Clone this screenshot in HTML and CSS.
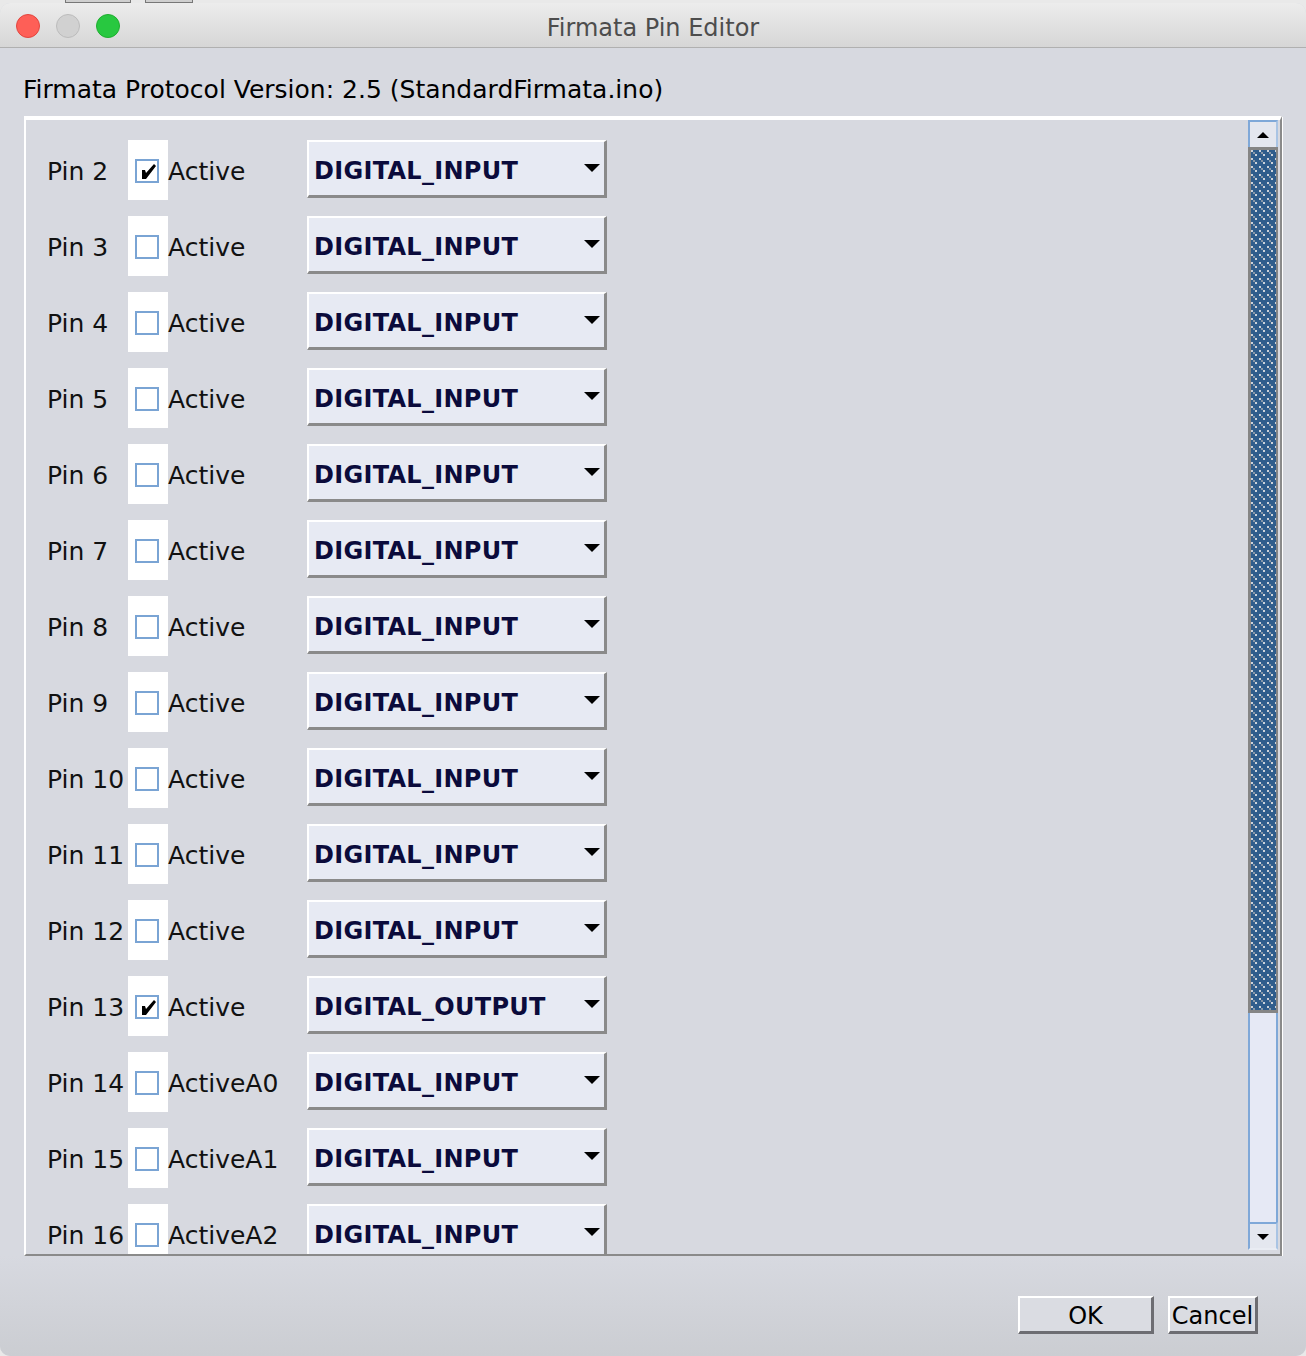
FILE: index.html
```html
<!DOCTYPE html>
<html>
<head>
<meta charset="utf-8">
<title>Firmata Pin Editor</title>
<link rel="stylesheet" href="styles.css">
</head>
<body>
<div class="desk"><span class="dk dk1"></span><span class="dk dk2"></span></div>
<div class="window">
  <div class="titlebar">
    <div class="lights"><span class="light red"></span><span class="light grey"></span><span class="light green"></span></div>
    <div class="title">Firmata Pin Editor</div>
    <div></div>
  </div>
  <div class="header">Firmata Protocol Version: 2.5 (StandardFirmata.ino)</div>
  <div class="scrollpane">
    <div class="viewport">
      <div class="row"><span class="pin">Pin 2</span><span class="cbcell"><span class="cb"><svg class="chk" viewBox="2 2 20 20"><polygon points="7,11 10,11 11,14 19,5 21,7 11,20 7,20"/></svg></span></span><span class="lbl">Active</span><div class="combo"><span>DIGITAL_INPUT</span><span class="arrow"></span></div></div>
      <div class="row"><span class="pin">Pin 3</span><span class="cbcell"><span class="cb"></span></span><span class="lbl">Active</span><div class="combo"><span>DIGITAL_INPUT</span><span class="arrow"></span></div></div>
      <div class="row"><span class="pin">Pin 4</span><span class="cbcell"><span class="cb"></span></span><span class="lbl">Active</span><div class="combo"><span>DIGITAL_INPUT</span><span class="arrow"></span></div></div>
      <div class="row"><span class="pin">Pin 5</span><span class="cbcell"><span class="cb"></span></span><span class="lbl">Active</span><div class="combo"><span>DIGITAL_INPUT</span><span class="arrow"></span></div></div>
      <div class="row"><span class="pin">Pin 6</span><span class="cbcell"><span class="cb"></span></span><span class="lbl">Active</span><div class="combo"><span>DIGITAL_INPUT</span><span class="arrow"></span></div></div>
      <div class="row"><span class="pin">Pin 7</span><span class="cbcell"><span class="cb"></span></span><span class="lbl">Active</span><div class="combo"><span>DIGITAL_INPUT</span><span class="arrow"></span></div></div>
      <div class="row"><span class="pin">Pin 8</span><span class="cbcell"><span class="cb"></span></span><span class="lbl">Active</span><div class="combo"><span>DIGITAL_INPUT</span><span class="arrow"></span></div></div>
      <div class="row"><span class="pin">Pin 9</span><span class="cbcell"><span class="cb"></span></span><span class="lbl">Active</span><div class="combo"><span>DIGITAL_INPUT</span><span class="arrow"></span></div></div>
      <div class="row"><span class="pin">Pin 10</span><span class="cbcell"><span class="cb"></span></span><span class="lbl">Active</span><div class="combo"><span>DIGITAL_INPUT</span><span class="arrow"></span></div></div>
      <div class="row"><span class="pin">Pin 11</span><span class="cbcell"><span class="cb"></span></span><span class="lbl">Active</span><div class="combo"><span>DIGITAL_INPUT</span><span class="arrow"></span></div></div>
      <div class="row"><span class="pin">Pin 12</span><span class="cbcell"><span class="cb"></span></span><span class="lbl">Active</span><div class="combo"><span>DIGITAL_INPUT</span><span class="arrow"></span></div></div>
      <div class="row"><span class="pin">Pin 13</span><span class="cbcell"><span class="cb"><svg class="chk" viewBox="2 2 20 20"><polygon points="7,11 10,11 11,14 19,5 21,7 11,20 7,20"/></svg></span></span><span class="lbl">Active</span><div class="combo"><span>DIGITAL_OUTPUT</span><span class="arrow"></span></div></div>
      <div class="row"><span class="pin">Pin 14</span><span class="cbcell"><span class="cb"></span></span><span class="lbl">ActiveA0</span><div class="combo"><span>DIGITAL_INPUT</span><span class="arrow"></span></div></div>
      <div class="row"><span class="pin">Pin 15</span><span class="cbcell"><span class="cb"></span></span><span class="lbl">ActiveA1</span><div class="combo"><span>DIGITAL_INPUT</span><span class="arrow"></span></div></div>
      <div class="row"><span class="pin">Pin 16</span><span class="cbcell"><span class="cb"></span></span><span class="lbl">ActiveA2</span><div class="combo"><span>DIGITAL_INPUT</span><span class="arrow"></span></div></div>
    </div>
    <div class="scrollbar">
      <div class="sb-btn sb-up"><span class="tri-up"></span></div>
      <div class="sb-thumb">
        <svg class="thumb-fill" preserveAspectRatio="none">
          <defs>
            <pattern id="dots" width="8" height="8" patternUnits="userSpaceOnUse">
              <rect width="8" height="8" fill="#2f5d8c"/>
              <rect x="0" y="0" width="2" height="2" fill="#cdd3da"/>
              <rect x="2" y="2" width="2" height="2" fill="#8797a8"/>
              <rect x="4" y="4" width="2" height="2" fill="#cdd3da"/>
            </pattern>
          </defs>
          <rect width="100%" height="100%" fill="url(#dots)"/>
        </svg>
      </div>
      <div class="sb-track"></div>
      <div class="sb-btn sb-down"><span class="tri-down"></span></div>
    </div>
  </div>
  <div class="footer">
    <button class="btn ok">OK</button>
    <button class="btn cancel">Cancel</button>
  </div>
</div>
</body>
</html>
```

FILE: styles.css
```css
html, body {
  margin: 0;
  padding: 0;
}
body {
  width: 1306px;
  height: 1356px;
  overflow: hidden;
  background: #e9e9e9;
  font-family: "DejaVu Sans", "Liberation Sans", sans-serif;
}

.desk {
  height: 3px;
  display: flex;
}
.dk {
  display: block;
  box-sizing: border-box;
  background: #cfcfcf;
  border: 1px solid #777;
  border-top: none;
}
.dk1 { margin-left: 65px; width: 66px; }
.dk2 { margin-left: 14px; width: 48px; }

.window {
  height: 1353px;
  border-radius: 10px;
  overflow: hidden;
  background: #d7d9e0;
  display: flex;
  flex-direction: column;
}

.titlebar {
  height: 45px;
  flex: none;
  box-sizing: border-box;
  background: linear-gradient(#ececec, #d6d6d6);
  border-bottom: 1px solid #b0b0b0;
  display: grid;
  grid-template-columns: 1fr auto 1fr;
  align-items: center;
}
.lights {
  display: flex;
  gap: 16px;
  padding-left: 16px;
  margin-top: 2px;
}
.light {
  width: 24px;
  height: 24px;
  border-radius: 50%;
  box-sizing: border-box;
  border: 1px solid;
}
.red { background: #fe5f57; border-color: #e2463f; }
.grey { background: #d1d1d1; border-color: #bcbcbc; }
.green { background: #28c840; border-color: #1fae2f; }
.title {
  font-size: 24px;
  color: #4d4d4d;
  margin-top: 5px;
}

.header {
  height: 68px;
  flex: none;
  box-sizing: border-box;
  padding: 27px 0 0 23px;
  font-size: 25px;
  line-height: 29px;
  color: #000;
}

.scrollpane {
  margin-left: 24px;
  width: 1258px;
  height: 1140px;
  flex: none;
  box-sizing: border-box;
  border-top: 4px solid #fff;
  border-left: 2px solid #fff;
  border-right: 2px solid #8a8a8a;
  border-bottom: 2px solid #8a8a8a;
  box-shadow: 1px 1px 0 #fff;
  display: flex;
}

.viewport {
  flex: 1;
  overflow: hidden;
  padding: 20px 0 0 21px;
}

.row {
  display: flex;
  align-items: center;
  height: 60px;
  margin-bottom: 16px;
}
.pin {
  width: 81px;
  flex: none;
  font-size: 25px;
  color: #111;
  margin-top: 2px;
}
.cbcell {
  width: 40px;
  height: 60px;
  flex: none;
  background: #fff;
  display: flex;
  align-items: center;
  padding-left: 7px;
  box-sizing: border-box;
}
.cb {
  width: 24px;
  height: 24px;
  box-sizing: border-box;
  border: 2px solid #7aa4d4;
  background: #fff;
  display: block;
  margin-top: 1px;
}
.chk {
  display: block;
  width: 20px;
  height: 20px;
  fill: #000;
}
.lbl {
  width: 139px;
  flex: none;
  font-size: 25px;
  color: #111;
  margin-top: 2px;
}
.combo {
  width: 300px;
  height: 58px;
  flex: none;
  align-self: flex-start;
  box-sizing: border-box;
  border-style: solid;
  border-width: 2px 3px 3px 2px;
  border-color: #fff #8a8a8a #8a8a8a #fff;
  background: #e7eaf3;
  display: flex;
  align-items: center;
  justify-content: space-between;
  padding: 4px 4px 0 5px;
  font-weight: bold;
  font-size: 24px;
  letter-spacing: 0.3px;
  color: #0b0b3b;
}
.arrow {
  width: 0;
  height: 0;
  border-left: 8px solid transparent;
  border-right: 8px solid transparent;
  border-top: 8px solid #000;
  margin-bottom: 6px;
}

.scrollbar {
  width: 32px;
  flex: none;
  box-sizing: border-box;
  padding: 0 2px 4px 0;
  display: flex;
  flex-direction: column;
}
.sb-btn {
  flex: none;
  box-sizing: border-box;
  background: #e4e7ef;
  display: flex;
  align-items: center;
  justify-content: center;
  border-style: solid;
  border-width: 2px;
  border-color: #7fa8d8 #a9c4e4 #e9ecf3 #7fa8d8;
}
.sb-up { height: 27px; border-bottom: none; }
.sb-down { height: 28px; }
.tri-up {
  width: 0;
  height: 0;
  border-left: 6px solid transparent;
  border-right: 6px solid transparent;
  border-bottom: 6px solid #000;
  margin-top: 1px;
}
.tri-down {
  width: 0;
  height: 0;
  border-left: 6px solid transparent;
  border-right: 6px solid transparent;
  border-top: 6px solid #000;
  margin-top: 2px;
}
.sb-thumb {
  height: 866px;
  flex: none;
  box-sizing: border-box;
  border-style: solid;
  border-color: #858585;
  border-width: 3px 2px 3px 3px;
}
.thumb-fill {
  display: block;
  width: 100%;
  height: 100%;
}
.sb-track {
  flex: 1;
  background: #e6e9f5;
  border-left: 2px solid #7fa8d8;
  border-right: 2px solid #7fa8d8;
}

.footer {
  flex: 1;
  display: flex;
  justify-content: flex-end;
  align-items: flex-start;
  gap: 14px;
  padding: 40px 48px 0 0;
  background: linear-gradient(#d7d9e0, #cbcdd2);
}
.btn {
  height: 38px;
  box-sizing: border-box;
  border-style: solid;
  border-width: 2px 3px 3px 2px;
  border-color: #fff #6d6d72 #6d6d72 #fff;
  background: #dadce2;
  font-family: "DejaVu Sans", "Liberation Sans", sans-serif;
  font-size: 24px;
  line-height: 30px;
  color: #000;
  padding: 3px 0 0 0;
}
.ok { width: 136px; }
.cancel { width: 90px; }
```
